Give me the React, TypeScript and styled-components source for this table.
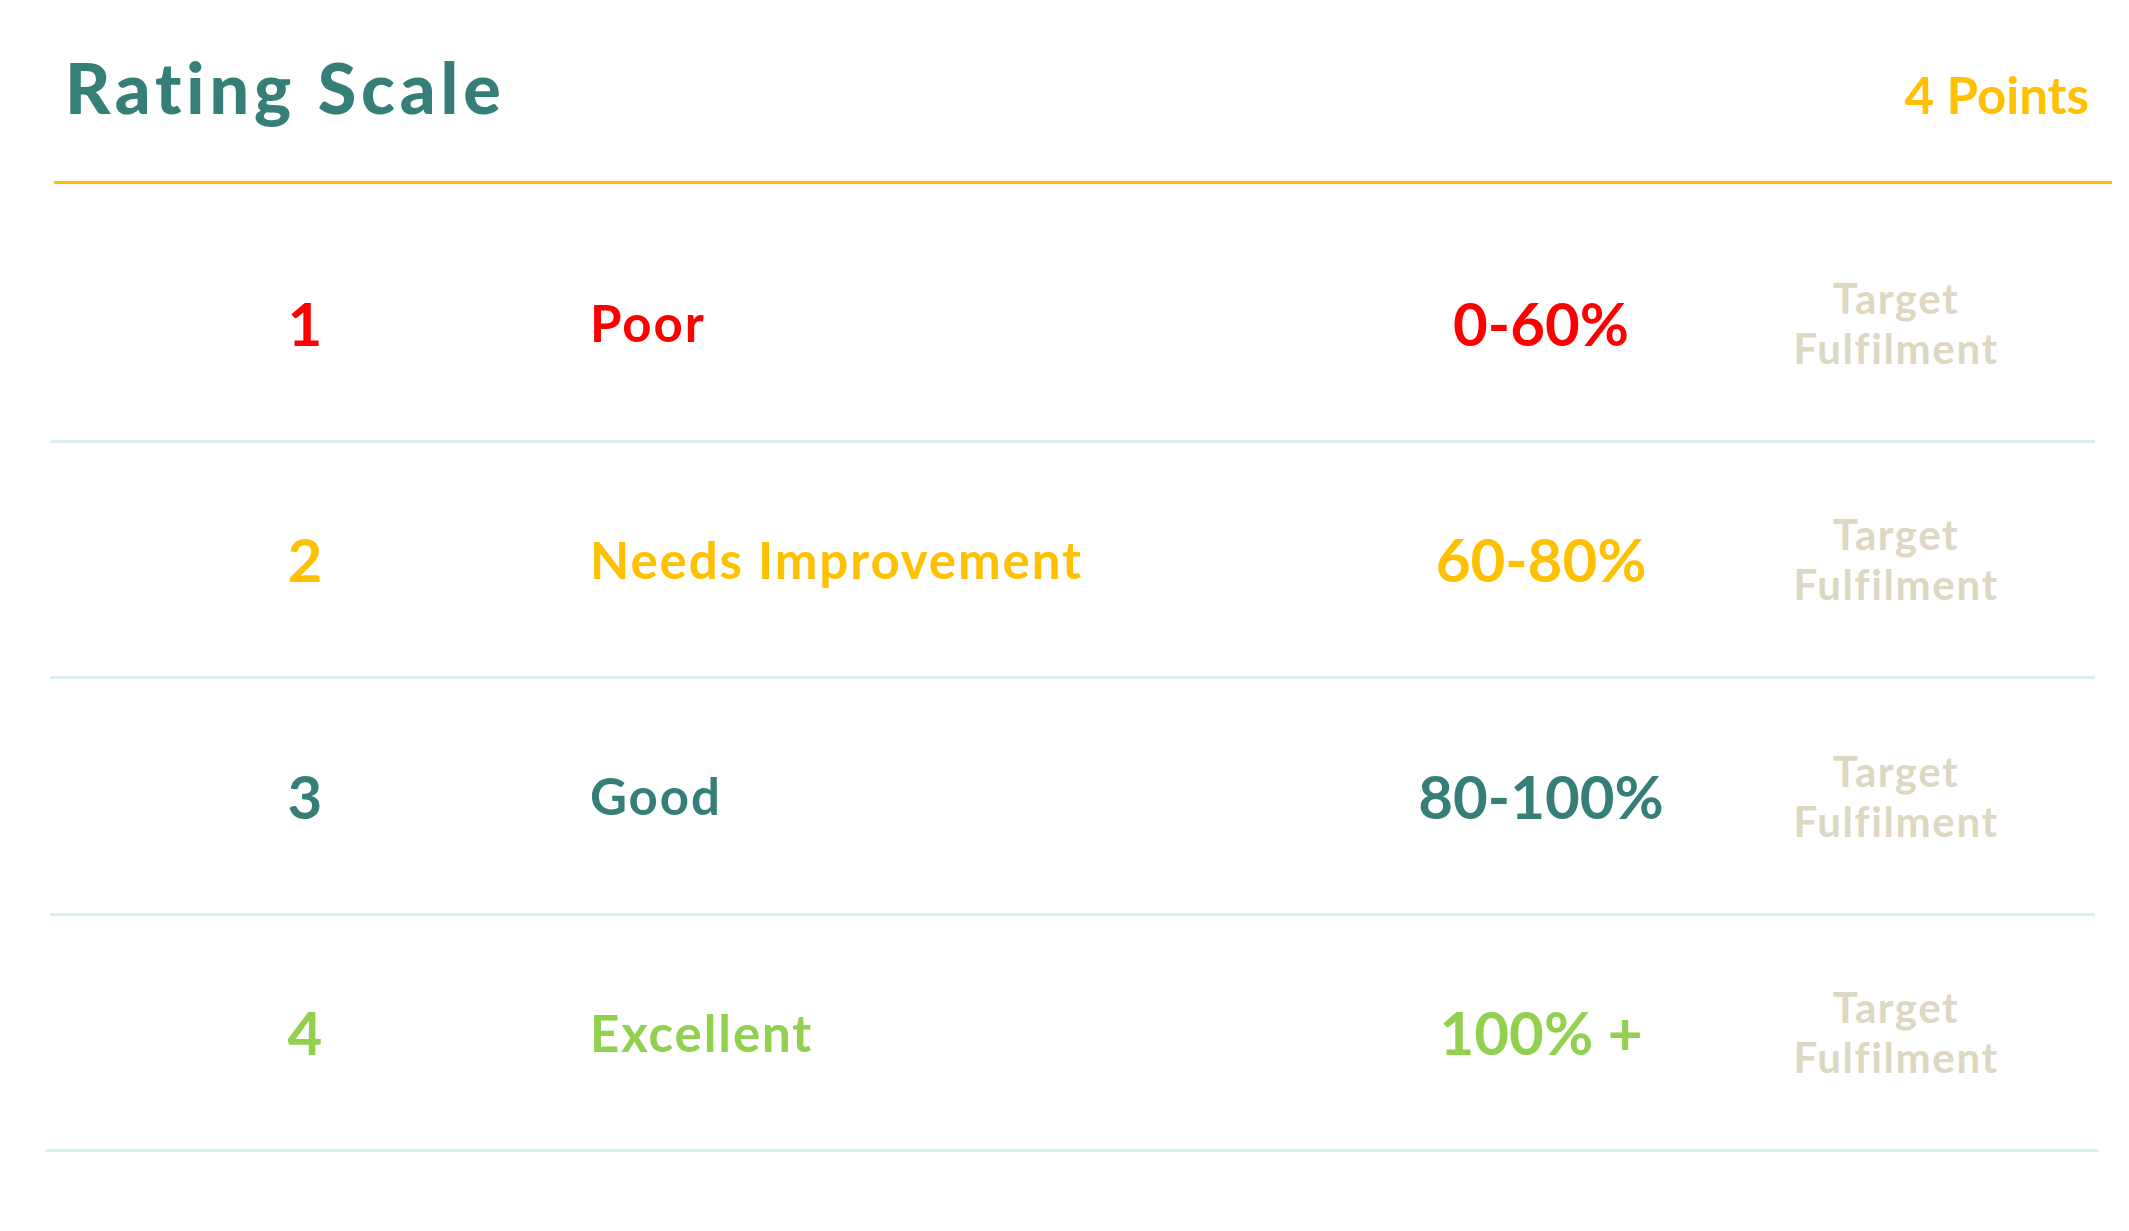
import React from "react";
import styled, { createGlobalStyle } from "styled-components";

const GlobalStyle = createGlobalStyle`
  html, body {
    margin: 0;
    padding: 0;
    background: #ffffff;
  }
  body {
    font-family: Lato, "Open Sans", sans-serif;
  }
`;

const Page = styled.div`
  width: 2129px;
  min-height: 1231px;
  background: #ffffff;
  display: flex;
  flex-direction: column;
`;

const Header = styled.header`
  margin: 0 17px 0 54px;
  padding: 52px 23px 0 11px;
  height: 129px;
  display: flex;
  align-items: baseline;
  justify-content: space-between;
  border-bottom: 3px solid #ffc000;
`;

const Title = styled.h1`
  margin: 0;
  font-family: Lato, sans-serif;
  font-weight: 900;
  font-size: 70px;
  line-height: 70px;
  letter-spacing: 4.9px;
  color: #367f79;
`;

const Points = styled.div`
  font-family: Lato, sans-serif;
  font-weight: 700;
  font-size: 51px;
  line-height: 51px;
  color: #ffc000;
`;

const List = styled.div`
  margin-top: 22px;
  display: flex;
  flex-direction: column;
`;

const Row = styled.div`
  margin: 0 34px 0 50px;
  height: 233.5px;
  display: grid;
  grid-template-columns: 510px 831px 300px 1fr;
  align-items: center;
`;

const Divider = styled.div<{ $wide?: boolean }>`
  height: 3px;
  background: #daeef3;
  margin: ${(p) => (p.$wide ? "0 30px 0 45px" : "0 34px 0 50px")};
`;

const Num = styled.div<{ $color: string }>`
  text-align: center;
  font-family: Lato, sans-serif;
  font-weight: 700;
  font-size: 60px;
  line-height: 1;
  color: ${(p) => p.$color};
`;

const Label = styled.div<{ $color: string }>`
  padding-left: 30px;
  font-family: Lato, sans-serif;
  font-weight: 700;
  font-size: 51px;
  line-height: 1;
  letter-spacing: 1.9px;
  color: ${(p) => p.$color};
`;

const Percent = styled.div<{ $color: string }>`
  text-align: center;
  font-family: Lato, sans-serif;
  font-weight: 700;
  font-size: 60px;
  line-height: 1;
  color: ${(p) => p.$color};
`;

const Target = styled.div`
  padding-left: 6px;
  text-align: center;
  font-family: Lato, sans-serif;
  font-weight: 700;
  font-size: 42px;
  line-height: 50px;
  letter-spacing: 1.6px;
  color: #ddd8c2;
`;

const rows = [
  { n: "1", label: "Poor", pct: "0-60%", color: "#ff0000" },
  { n: "2", label: "Needs Improvement", pct: "60-80%", color: "#ffc000" },
  { n: "3", label: "Good", pct: "80-100%", color: "#367f79" },
  { n: "4", label: "Excellent", pct: "100% +", color: "#92d050" },
];

export default function App() {
  return (
    <Page>
      <GlobalStyle />
      <Header>
        <Title>Rating Scale</Title>
        <Points>4 Points</Points>
      </Header>
      <List>
        {rows.map((r, i) => (
          <React.Fragment key={r.n}>
            <Row>
              <Num $color={r.color}>{r.n}</Num>
              <Label $color={r.color}>{r.label}</Label>
              <Percent $color={r.color}>{r.pct}</Percent>
              <Target>
                Target
                <br />
                Fulfilment
              </Target>
            </Row>
            <Divider $wide={i === rows.length - 1} />
          </React.Fragment>
        ))}
      </List>
    </Page>
  );
}
